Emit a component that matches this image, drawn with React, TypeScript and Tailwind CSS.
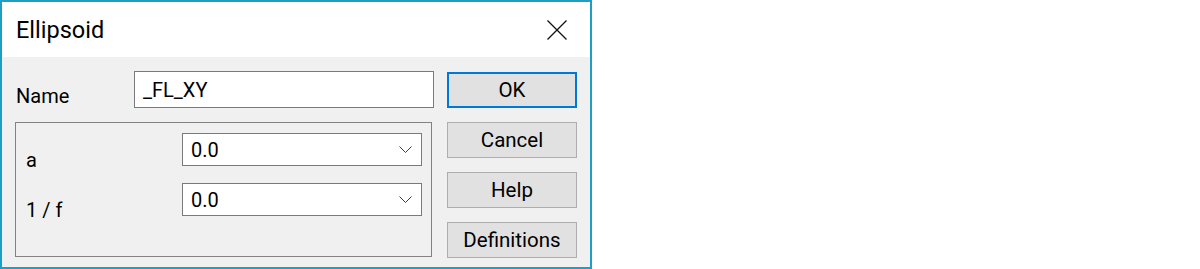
import React from "react";

function Chevron() {
  return (
    <svg width="13" height="7" viewBox="0 0 13 7" className="shrink-0">
      <polyline points="0.5,0.5 6.5,6.5 12.5,0.5" fill="none" stroke="#3c3c3c" strokeWidth="1" />
    </svg>
  );
}

function Combo({ value }: { value: string }) {
  return (
    <div className="w-[240px] h-[33px] bg-white border border-[#7a7a7a] flex items-center justify-between pl-[8px] pr-[9px]">
      <span className="text-[20px] leading-[20px] text-black">{value}</span>
      <Chevron />
    </div>
  );
}

function Btn({ label, primary }: { label: string; primary?: boolean }) {
  return (
    <button
      className={
        primary
          ? "w-[130px] h-[36px] bg-[#e1e1e1] border-2 border-[#0078d7] flex items-center justify-center text-[20.5px] leading-[20px] text-black"
          : "w-[130px] h-[36px] bg-[#e1e1e1] border border-[#adadad] flex items-center justify-center text-[20.5px] leading-[20px] text-black"
      }
    >
      {label}
    </button>
  );
}

export default function App() {
  return (
    <div className="w-[1200px] h-[269px] bg-white font-[family-name:Roboto,'Liberation_Sans',sans-serif]">
      <div className="w-[592px] h-[269px] border-2 border-[#1aa0c4] bg-[#f0f0f0] flex flex-col">
        <div className="h-[55px] bg-white flex items-center justify-between pl-[14px] pr-[23px] shrink-0">
          <span className="text-[23.5px] leading-[22px] text-black">Ellipsoid</span>
          <svg width="20" height="20" viewBox="0 0 20 20">
            <path d="M0.5 0.5 L19.5 19.5 M19.5 0.5 L0.5 19.5" stroke="#111" strokeWidth="1.3" fill="none" />
          </svg>
        </div>
        <div className="flex pl-[13px]">
          <div className="flex flex-col pt-[14px] w-[419px]">
            <div className="flex h-[37px]">
              <div className="w-[119px] pl-px pt-[15px] text-[20px] leading-[20px] text-black">Name</div>
              <div className="w-[300px] h-[37px] bg-white border border-[#7a7a7a] flex items-center pl-[8px] text-[20px] leading-[20px] text-black">
                _FL_XY
              </div>
            </div>
            <div className="mt-[14px] w-[417px] h-[135px] border border-[#828282] pt-[10px] pl-[10px] flex flex-col gap-[17px]">
              <div className="flex h-[33px]">
                <div className="w-[156px] pt-[17px] text-[20px] leading-[20px] text-black">a</div>
                <Combo value="0.0" />
              </div>
              <div className="flex h-[33px]">
                <div className="w-[156px] pt-[17px] text-[20px] leading-[20px] text-black">1 / f</div>
                <Combo value="0.0" />
              </div>
            </div>
          </div>
          <div className="flex flex-col gap-[14px] pt-[15px] ml-[13px]">
            <Btn label="OK" primary />
            <Btn label="Cancel" />
            <Btn label="Help" />
            <Btn label="Definitions" />
          </div>
        </div>
      </div>
    </div>
  );
}
